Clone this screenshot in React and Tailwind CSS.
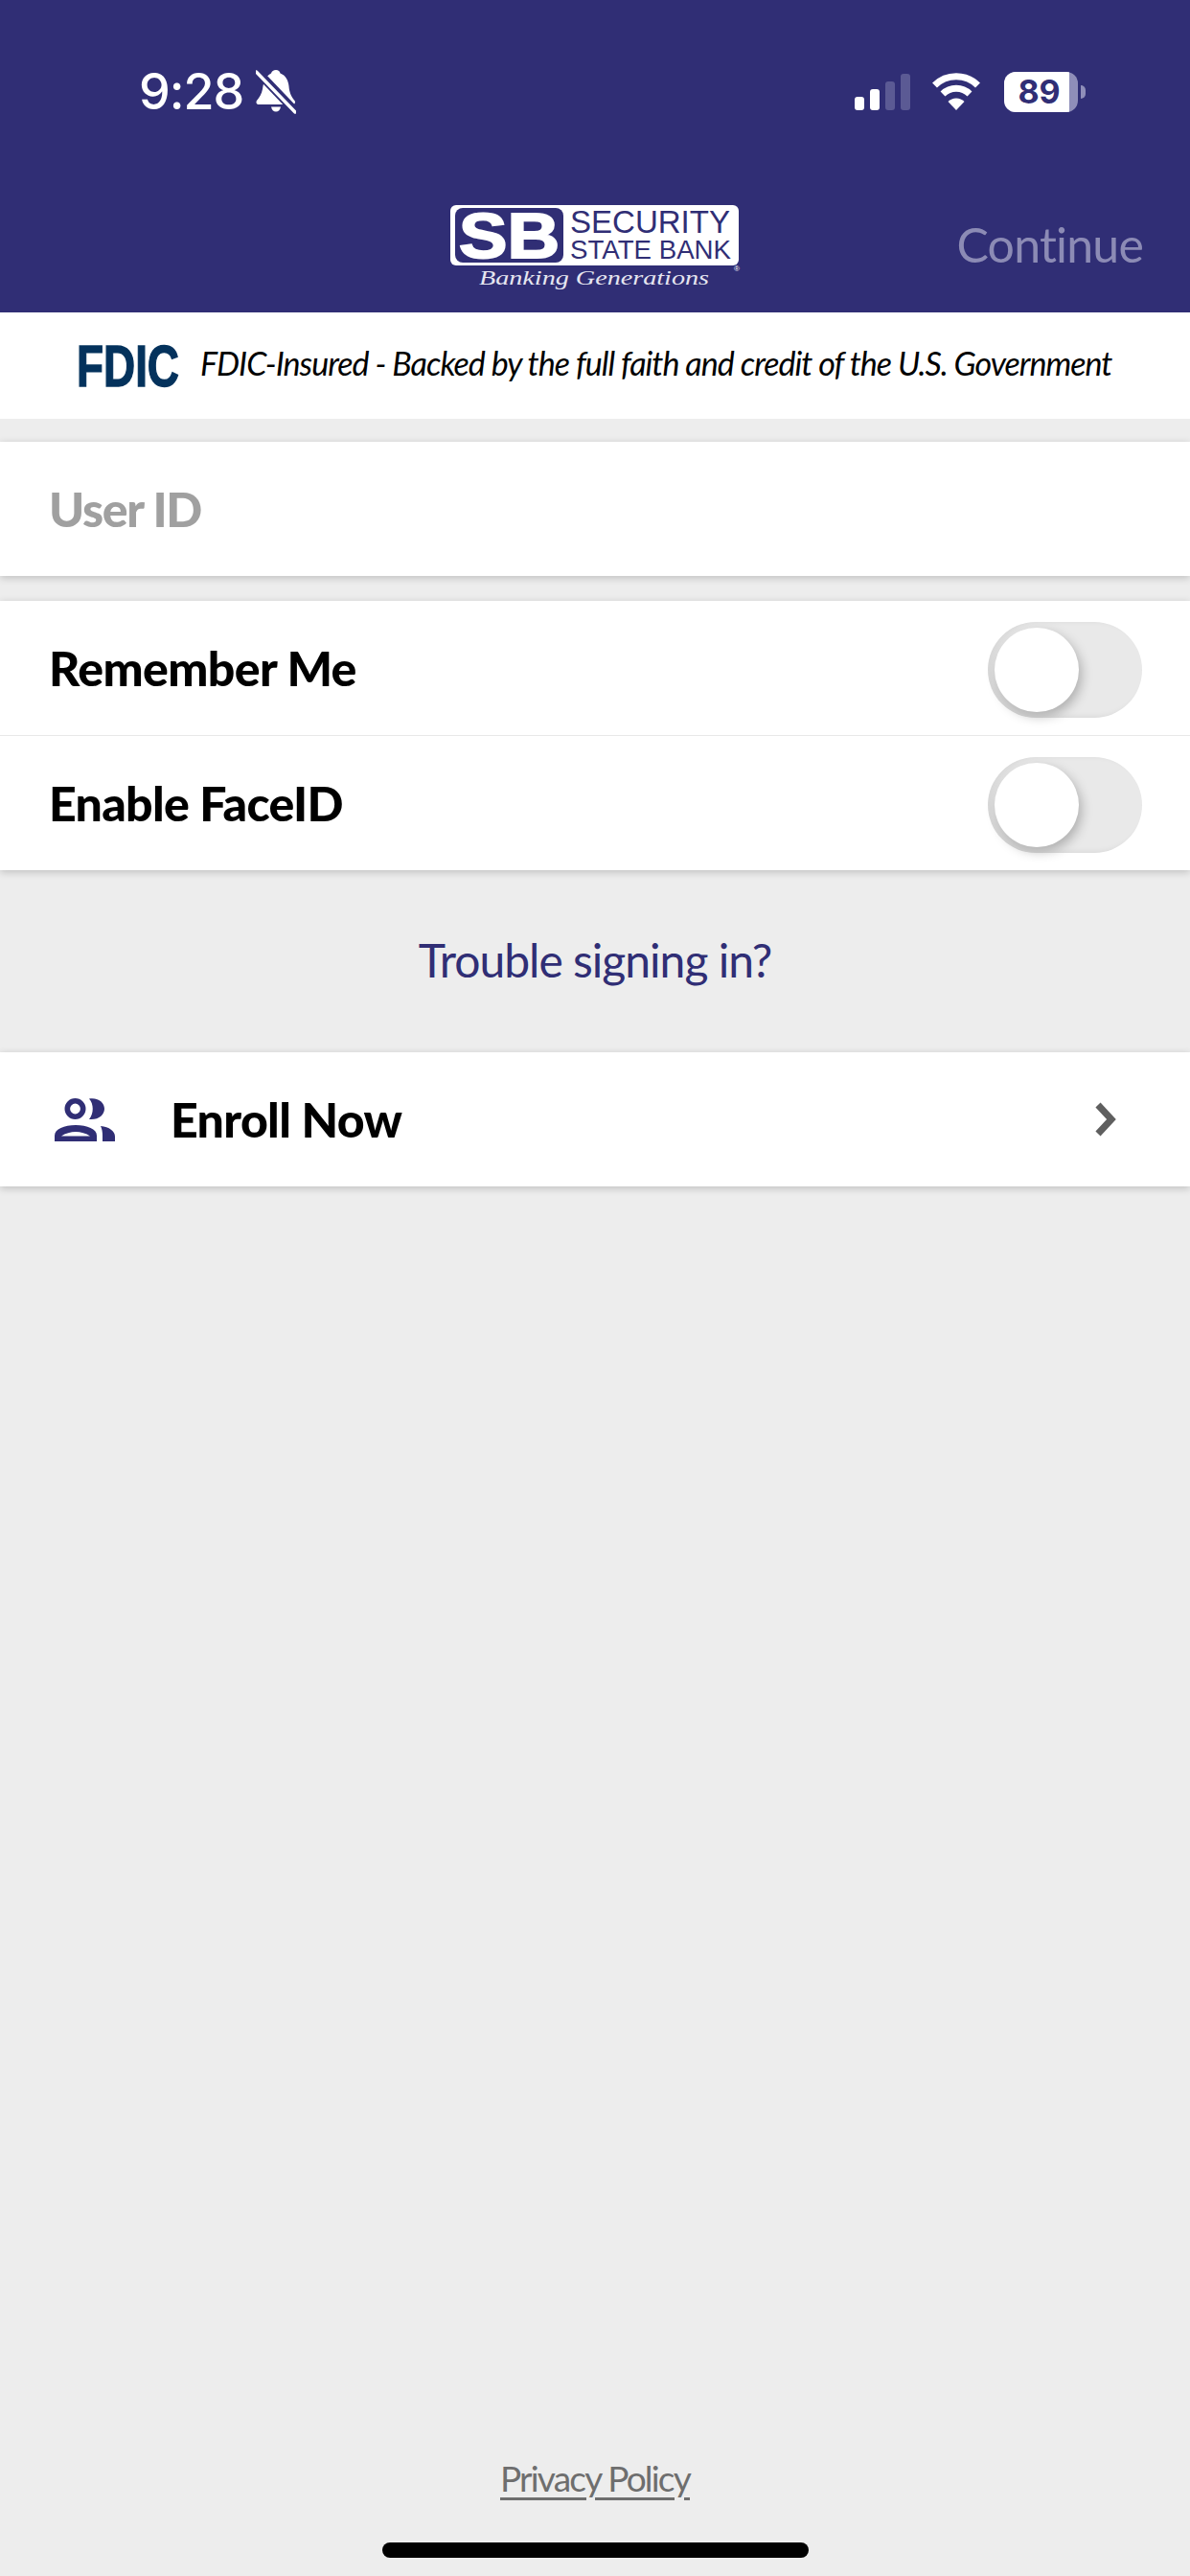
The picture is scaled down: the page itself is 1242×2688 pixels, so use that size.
import React from "react";

const BellSlash = () => (
  <svg width="42" height="46" viewBox="0 0 42 46" className="ml-[13px]">
    <path d="M21 0c2.500 0 4 1.500 4.500 3.500C31 5.500 34 11 34.500 17c.5 6 2 10 6 15 1 1.500.5 4-2 4H3c-2.500 0-3-2.500-2-4 3-3.500 5-7 6-12 1-6 2-13 9-16.500C16.500 1.500 18.500 0 21 0Z" fill="#fff" />
    <path d="M16 38.500h10c-.5 3-2.500 5-5 5s-4.500-2-5-5Z" fill="#fff" />
    <path d="M-2 -2 L44 46" stroke="#302e75" strokeWidth="9" />
    <path d="M0.500 2 L41 44" stroke="#fff" strokeWidth="3.400" strokeLinecap="round" />
  </svg>
);

const StatusIcons = () => (
  <div className="flex items-center">
    <div className="flex items-end gap-[6px] h-[38px]">
      <div className="w-[10px] h-[14px] rounded-[3px] bg-white" />
      <div className="w-[10px] h-[22px] rounded-[3px] bg-white" />
      <div className="w-[10px] h-[30px] rounded-[3px] bg-[#5b5a94]" />
      <div className="w-[10px] h-[38px] rounded-[3px] bg-[#5b5a94]" />
    </div>
    <svg width="52" height="40" viewBox="0 0 52 40" className="ml-[22px]">
      <path d="M3.500 13A32 32 0 0 1 48.500 13" fill="none" stroke="#fff" strokeWidth="7" />
      <path d="M12 22A20 20 0 0 1 40 22" fill="none" stroke="#fff" strokeWidth="7" />
      <path d="M26 39L17.500 30A12 12 0 0 1 34.500 30Z" fill="#fff" />
    </svg>
    <div className="ml-[24px] flex items-center">
      <div className="relative w-[77px] h-[42px] rounded-[12px] overflow-hidden bg-[#8f8eb9]">
        <div className="w-[68px] h-full bg-white flex items-center justify-center pl-[5px] text-[34px] leading-none font-bold text-[#302e75] font-['Inter',sans-serif]">
          89
        </div>
      </div>
      <div className="ml-[3px] w-[5px] h-[14px] rounded-r-full bg-[#8f8eb9]" />
    </div>
  </div>
);

// bank logo, the script line has no matching font so a serif italic stands in
const BankLogo = () => (
  <svg width="306" height="106" viewBox="0 -10 306 106" className="ml-[470px] -mt-[10px] block">
    <rect x="0" y="0" width="301" height="63" rx="6" fill="#fff" />
    <rect x="5" y="3" width="113" height="57" rx="8" fill="#302e75" />
    <text x="9" y="55" fontFamily="Liberation Sans" fontWeight="700" fontSize="66" fill="#fff" stroke="#fff" strokeWidth="2" textLength="105" lengthAdjust="spacingAndGlyphs">
      SB
    </text>
    <text x="125" y="29" fontFamily="Liberation Sans" fontSize="33" fill="#302e75" textLength="167" lengthAdjust="spacingAndGlyphs">
      SECURITY
    </text>
    <text x="125" y="56" fontFamily="Liberation Sans" fontSize="28" fill="#302e75" textLength="168" lengthAdjust="spacingAndGlyphs">
      STATE BANK
    </text>
    <text x="30" y="83" fontFamily="Liberation Serif" fontStyle="italic" fontSize="22" fill="#e6e6f0" textLength="240" lengthAdjust="spacingAndGlyphs">
      Banking Generations
    </text>
    <text x="296" y="69" fontFamily="Liberation Sans" fontSize="8" fill="#fff">®</text>
  </svg>
);

const Toggle = () => (
  <div className="relative mt-1 w-[161px] h-[100px] rounded-full bg-[#e9e9e9] shadow-[inset_5px_-1px_6px_rgba(0,0,0,0.08)]">
    <div className="absolute left-[7px] top-[6px] w-[88px] h-[88px] rounded-full bg-white shadow-[3px_5px_12px_rgba(0,0,0,0.25)]" />
  </div>
);

const PeopleIcon = () => (
  <svg width="63" height="45" viewBox="0 0 63 45" fill="#302e75">
    <circle cx="21.500" cy="11" r="8.200" fill="none" stroke="#302e75" strokeWidth="5.600" />
    <path d="M36 .5C46-1 52 5 52 11s-6 12-16 11c5-6 5-16 0-21.500Z" />
    <path fillRule="evenodd" d="M0 45v-6c0-7 10-11 22-11s22 4 22 11v6ZM7 39.500h30c-4-3-10-4.500-15-4.500s-11 1.500-15 4.500Z" />
    <path d="M48 29c9 1 15 5 15 11v5H50v-6c0-4-.5-7-2-10Z" />
  </svg>
);

const Chevron = () => (
  <svg width="24" height="38" viewBox="0 0 24 38">
    <path d="M4 4L18 19L4 34" fill="none" stroke="#5f5f5f" strokeWidth="7" />
  </svg>
);

export default function App() {
  return (
    <div className="w-[1242px] h-[2688px] flex flex-col bg-[#ededed] font-['Lato',sans-serif] overflow-hidden">
      <header className="h-[326px] bg-[#302e75] flex flex-col">
        <div className="flex items-center justify-between pt-[73px] pl-[145px] pr-[109px] h-[118px]">
          <div className="flex items-center">
            <span className="text-[52px] leading-none font-medium text-white font-['Inter',sans-serif] tracking-[-1px]">9:28</span>
            <BellSlash />
          </div>
          <StatusIcons />
        </div>
        <div className="flex items-start mt-[96px]">
          <BankLogo />
          <span className="ml-auto pr-[49px] mt-[6px] text-[50px] leading-[70px] font-normal text-[#8c8bb5] tracking-[-0.8px]">Continue</span>
        </div>
      </header>

      <div className="h-[111px] bg-white flex items-center pl-[80px]">
        <svg width="150" height="72" viewBox="0 -12 150 72" className="-mr-[42px]">
          <text x="0" y="45" fontFamily="Liberation Sans" fontWeight="700" fontSize="62" fill="#04325c" stroke="#04325c" strokeWidth="1.500" textLength="107" lengthAdjust="spacingAndGlyphs">
            FDIC
          </text>
        </svg>
        <span className="ml-[21px] -mt-[6px] text-[34px] italic font-normal text-black tracking-[-1px]">
          FDIC-Insured - Backed by the full faith and credit of the U.S. Government
        </span>
      </div>

      <div className="mt-[24px] h-[140px] bg-white flex items-center px-[51px] shadow-[0_2px_8px_rgba(0,0,0,0.2)]">
        <span className="text-[50px] font-black text-[#a0a0a0] tracking-[-1.3px]">User ID</span>
      </div>

      <div className="mt-[26px] bg-white shadow-[0_2px_8px_rgba(0,0,0,0.2)]">
        <div className="h-[141px] flex items-center justify-between pl-[51px] pr-[50px] border-b border-[#e8e8e8]">
          <span className="text-[50px] font-black text-black tracking-[-0.6px]">Remember Me</span>
          <Toggle />
        </div>
        <div className="h-[140px] flex items-center justify-between pl-[51px] pr-[50px]">
          <span className="text-[50px] font-black text-black tracking-[-0.7px]">Enable FaceID</span>
          <Toggle />
        </div>
      </div>

      <div className="h-[190px] flex items-center justify-center pb-[2px]">
        <span className="text-[48px] text-[#302e75] tracking-[-1px]">Trouble signing in?</span>
      </div>

      <div className="h-[140px] bg-white flex items-center pl-[57px] pr-[76px] shadow-[0_2px_8px_rgba(0,0,0,0.2)]">
        <PeopleIcon />
        <span className="ml-[58px] text-[50px] font-black text-black tracking-[-0.65px]">Enroll Now</span>
        <div className="ml-auto">
          <Chevron />
        </div>
      </div>

      <div className="mt-auto flex flex-col items-center pb-[19px]">
        <span className="text-[37px] text-[#6e6e6e] underline underline-offset-[6px] decoration-[3px] tracking-[-1.8px]">Privacy Policy</span>
        <div className="mt-[40px] w-[445px] h-[16px] rounded-full bg-black" />
      </div>
    </div>
  );
}
